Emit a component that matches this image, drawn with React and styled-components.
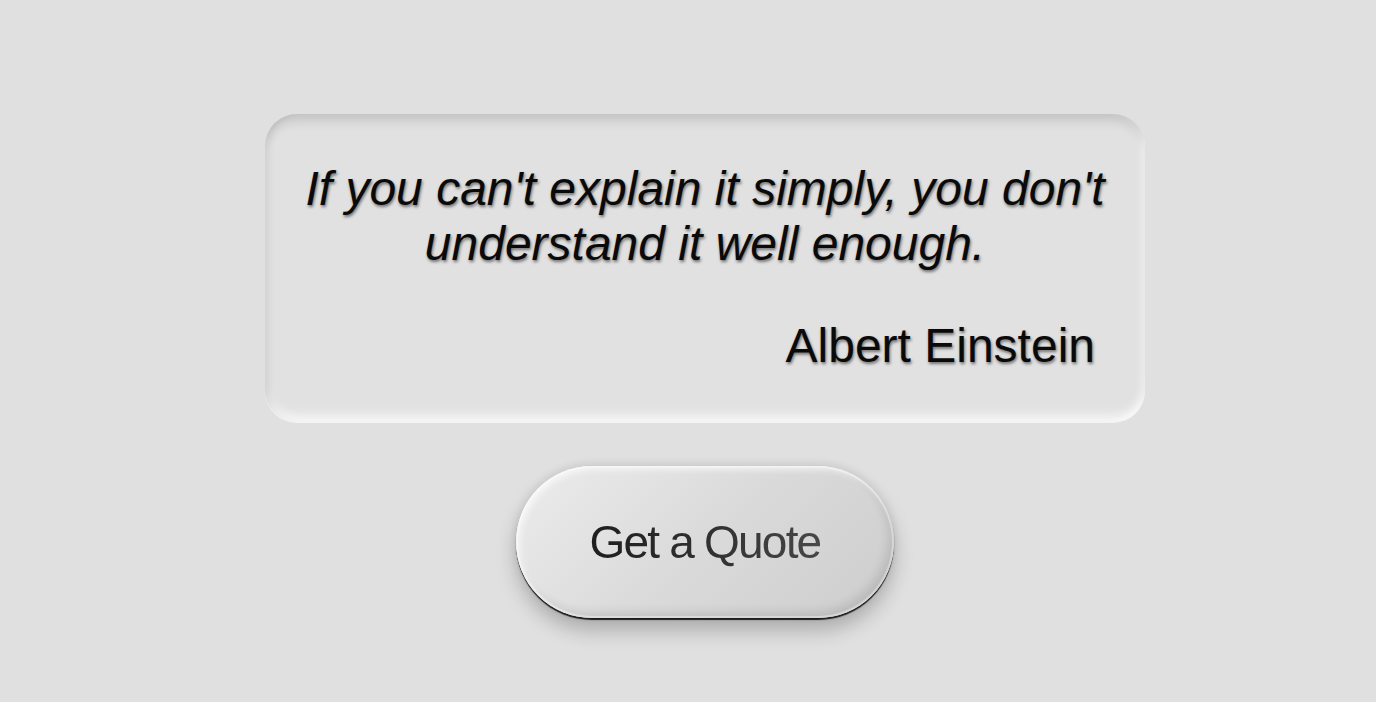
import React from "react";
import styled, { createGlobalStyle } from "styled-components";

const GlobalStyle = createGlobalStyle`
  html, body {
    margin: 0;
    padding: 0;
    background: #e0e0e0;
  }
  body {
    font-family: "Liberation Sans", Arial, sans-serif;
  }
`;

const Page = styled.main`
  min-height: 702px;
  box-sizing: border-box;
  display: flex;
  flex-direction: column;
  align-items: center;
  padding: 114px 0 0 34px;
  gap: 44px;
`;

const QuoteCard = styled.section`
  width: 880px;
  height: 308px;
  box-sizing: border-box;
  padding: 47px 20px 0;
  border-radius: 32px;
  background: #e1e1e1;
  box-shadow:
    inset 0 10px 12px -4px rgba(0, 0, 0, 0.14),
    inset 8px 0 10px -6px rgba(0, 0, 0, 0.08),
    inset 0 -10px 12px -4px rgba(255, 255, 255, 0.8),
    inset -8px 0 10px -6px rgba(255, 255, 255, 0.75),
    0 1px 0 rgba(255, 255, 255, 0.6);
  display: flex;
  flex-direction: column;
`;

const QuoteText = styled.p`
  margin: 0;
  font-size: 48px;
  line-height: 55px;
  font-style: italic;
  text-align: center;
  color: #0a0a0a;
  text-shadow: 1px 2px 3px rgba(0, 0, 0, 0.5);
`;

const Author = styled.p`
  margin: 47px 0 0;
  padding-right: 30px;
  font-size: 48px;
  line-height: 55px;
  text-align: right;
  color: #0a0a0a;
  text-shadow: 1px 2px 3px rgba(0, 0, 0, 0.5);
`;

const QuoteButton = styled.button`
  width: 378px;
  height: 152px;
  border: none;
  border-radius: 76px;
  cursor: pointer;
  font-family: "Liberation Sans", Arial, sans-serif;
  font-size: 46px;
  letter-spacing: -1.8px;
  color: #2a2a2a;
  background: linear-gradient(135deg, #ececec 0%, #dadada 50%, #cdcdcd 100%);
  box-shadow:
    inset 0 0 0 2px rgba(255, 255, 255, 0.35),
    inset 4px 4px 6px rgba(255, 255, 255, 0.6),
    inset -6px -6px 10px rgba(0, 0, 0, 0.1),
    0 2px 1px #1c1c1c,
    0 12px 20px rgba(0, 0, 0, 0.24),
    0 -2px 8px rgba(0, 0, 0, 0.08);

  span {
    background: linear-gradient(90deg, #1e1e1e 0%, #303030 50%, #474747 100%);
    -webkit-background-clip: text;
    background-clip: text;
    color: transparent;
  }
`;

export default function App() {
  return (
    <>
      <GlobalStyle />
      <Page>
        <QuoteCard>
          <QuoteText>
            If you can't explain it simply, you don't understand it well
            enough.
          </QuoteText>
          <Author>Albert Einstein</Author>
        </QuoteCard>
        <QuoteButton>
          <span>Get a Quote</span>
        </QuoteButton>
      </Page>
    </>
  );
}
